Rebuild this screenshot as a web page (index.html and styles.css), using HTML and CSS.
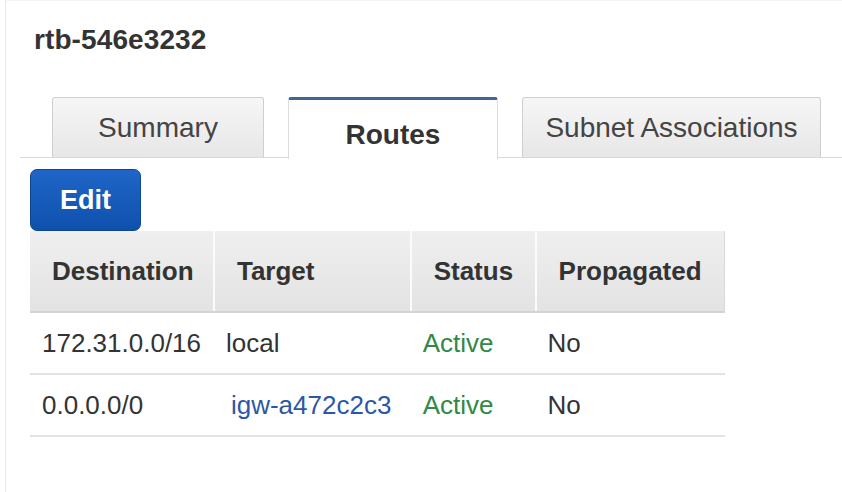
FILE: index.html
```html
<!DOCTYPE html>
<html>
<head>
<meta charset="utf-8">
<link rel="stylesheet" href="styles.css">
</head>
<body>
<div class="panel">
  <h1 class="title">rtb-546e3232</h1>
  <div class="tabs">
    <div class="tab">Summary</div>
    <div class="tab active">Routes</div>
    <div class="tab wide">Subnet Associations</div>
  </div>
  <div class="toolbar"><button class="btn">Edit</button></div>
  <table class="routes">
    <thead>
      <tr>
        <th class="c1">Destination</th>
        <th class="c2">Target</th>
        <th class="c3">Status</th>
        <th class="c4">Propagated</th>
      </tr>
    </thead>
    <tbody>
      <tr>
        <td>172.31.0.0/16</td>
        <td>local</td>
        <td class="ok">Active</td>
        <td>No</td>
      </tr>
      <tr>
        <td>0.0.0.0/0</td>
        <td><a class="link" href="#">igw-a472c2c3</a></td>
        <td class="ok">Active</td>
        <td>No</td>
      </tr>
    </tbody>
  </table>
</div>
</body>
</html>
```

FILE: styles.css
```css
html, body {
  margin: 0;
  padding: 0;
  background: #fff;
  font-family: "Liberation Sans", Arial, sans-serif;
  color: #333;
}

.panel {
  margin-left: 5px;
  height: 492px;
  box-sizing: border-box;
  border-left: 1px solid #e9e9e9;
  border-top: 1px solid #f3f3f3;
  overflow: hidden;
}

.title {
  margin: 23px 0 0 28px;
  font-size: 28px;
  line-height: 32px;
  font-weight: bold;
  color: #333;
  letter-spacing: 0.1px;
}

.tabs {
  display: flex;
  gap: 24px;
  margin: 41px 0 0 14px;
  padding-left: 32px;
  height: 60px;
  border-bottom: 1px solid #d9d9d9;
}

.tab {
  box-sizing: border-box;
  height: 60px;
  width: 212px;
  padding: 0;
  display: flex;
  align-items: center;
  justify-content: center;
  font-size: 28px;
  color: #444;
  background: linear-gradient(#f6f6f6, #e7e7e7);
  border: 1px solid #cfcfcf;
  border-bottom: none;
  border-radius: 3px 3px 0 0;
}

.tab.wide {
  width: 299px;
}

.tab.active {
  width: 210px;
  height: 62px;
  margin-bottom: -2px;
  padding-top: 10px;
  background: #fff;
  border-top: 3px solid #3e6791;
  border-left: 1px solid #dcdcdc;
  border-right: 1px solid #dcdcdc;
  font-weight: bold;
  color: #333;
}

.toolbar {
  margin: 11px 0 0 24px;
  display: flex;
}

.btn {
  width: 111px;
  height: 62px;
  padding: 0;
  border: 1px solid #0d4792;
  border-radius: 7px;
  background: linear-gradient(#1f66c8, #0f50ad);
  color: #fff;
  font-family: "Liberation Sans", Arial, sans-serif;
  font-size: 27px;
  font-weight: bold;
}

.routes {
  margin-left: 24px;
  border-collapse: collapse;
  width: 695px;
}

.routes th {
  height: 81px;
  box-sizing: border-box;
  padding: 0 0 0 22px;
  text-align: left;
  font-size: 26px;
  font-weight: bold;
  color: #333;
  background: linear-gradient(#efefef, #e3e3e3);
  border-bottom: 2px solid #d3d3d3;
  border-left: 2px solid #fbfbfb;
}

.routes th.c1 { width: 184px; border-left: none; }
.routes th.c2 { width: 197px; }
.routes th.c3 { width: 125px; }
.routes th.c4 { width: 189px; border-right: 1px solid #d8d8d8; }

.routes td {
  height: 62px;
  box-sizing: border-box;
  padding: 0 0 0 12px;
  font-size: 26px;
  color: #333;
  border-bottom: 2px solid #e3e3e3;
}

.routes td.ok {
  color: #2f8a45;
}

.link {
  color: #2b58a6;
  text-decoration: none;
  margin-left: 5px;
}
```
